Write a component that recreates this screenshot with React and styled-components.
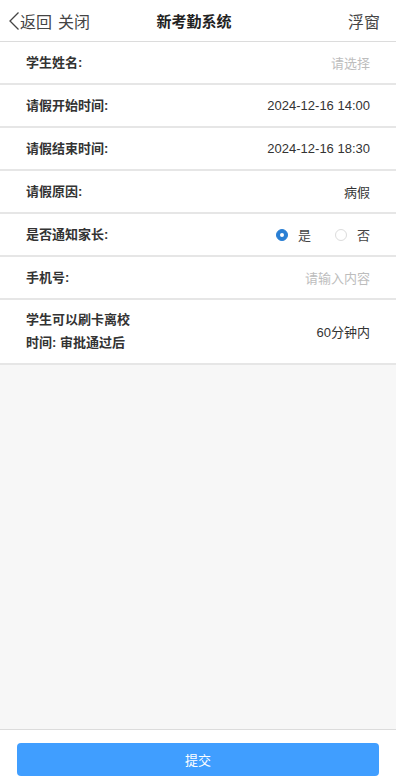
import React from "react";
import styled, { createGlobalStyle } from "styled-components";

const GlobalStyle = createGlobalStyle`
  html, body {
    margin: 0;
    padding: 0;
    height: 100%;
  }
  body {
    font-family: "Liberation Sans", "Noto Sans CJK SC", sans-serif;
    color: #333;
    background: #f7f7f7;
  }
  #root {
    height: 100%;
  }
`;

const rows = [
  { label: "学生姓名:", value: "请选择", placeholder: true },
  { label: "请假开始时间:", value: "2024-12-16 14:00" },
  { label: "请假结束时间:", value: "2024-12-16 18:30" },
  { label: "请假原因:", value: "病假" },
  { label: "是否通知家长:", radio: true },
  { label: "手机号:", value: "请输入内容", placeholder: true },
];

const App = () => {
  return (
    <Page>
      <GlobalStyle />
      <NavBar>
        <NavLeft>
          <svg width="12" height="20" viewBox="0 0 12 20">
            <path d="M10.5 1.5 L2 10 L10.5 18.5" fill="none" stroke="#444" strokeWidth="1.3" />
          </svg>
          <span>返回</span>
          <span className="close">关闭</span>
        </NavLeft>
        <Title>新考勤系统</Title>
        <NavRight>浮窗</NavRight>
      </NavBar>

      <Form>
        {rows.map((row) => (
          <Row key={row.label}>
            <Label>{row.label}</Label>
            {row.radio ? (
              <RadioGroup>
                <RadioItem>
                  <Radio checked />
                  是
                </RadioItem>
                <RadioItem>
                  <Radio />
                  否
                </RadioItem>
              </RadioGroup>
            ) : (
              <Value placeholder={row.placeholder ? 1 : 0}>{row.value}</Value>
            )}
          </Row>
        ))}
        <Row tall>
          <Stack>
            <Label>学生可以刷卡离校</Label>
            <Label>时间: 审批通过后</Label>
          </Stack>
          <Value>60分钟内</Value>
        </Row>
      </Form>

      <Spacer />

      <Footer>
        <SubmitButton>提交</SubmitButton>
      </Footer>
    </Page>
  );
};

const Page = styled.div`
  min-height: 100%;
  display: flex;
  flex-direction: column;
`;

const NavBar = styled.div`
  height: 42px;
  box-sizing: border-box;
  background: #fff;
  border-bottom: 1px solid #dcdcdc;
  display: grid;
  grid-template-columns: 1fr auto 1fr;
  align-items: center;
  padding: 0 16px 0 8px;
`;

const NavLeft = styled.div`
  display: flex;
  align-items: center;
  font-size: 16px;
  color: #444;
  .close {
    margin-left: 6px;
  }
`;

const Title = styled.div`
  font-size: 15px;
  font-weight: 700;
  color: #222;
`;

const NavRight = styled.div`
  justify-self: end;
  font-size: 16px;
  color: #444;
`;

const Form = styled.div`
  background: #fff;
`;

const Row = styled.div`
  height: ${(p) => (p.tall ? "65px" : "43px")};
  box-sizing: border-box;
  border-bottom: 2px solid #e6e6e6;
  display: flex;
  align-items: center;
  justify-content: space-between;
  padding: 0 26px 0 26px;
`;

const Stack = styled.div`
  display: flex;
  flex-direction: column;
  gap: 5px;
`;

const Label = styled.div`
  font-size: 13px;
  font-weight: 700;
  color: #333;
  line-height: 18px;
`;

const Value = styled.div`
  font-size: 13px;
  color: ${(p) => (p.placeholder ? "#bdbdbd" : "#333")};
`;

const RadioGroup = styled.div`
  display: flex;
  align-items: center;
  gap: 24px;
`;

const RadioItem = styled.label`
  display: flex;
  align-items: center;
  gap: 10px;
  font-size: 13px;
  color: #444;
`;

const Radio = styled.span`
  width: 12px;
  height: 12px;
  box-sizing: border-box;
  border-radius: 50%;
  background: ${(p) => (p.checked ? "#2a7fd4" : "#fff")};
  border: 1px solid ${(p) => (p.checked ? "#2a7fd4" : "#dcdcdc")};
  display: flex;
  align-items: center;
  justify-content: center;
  &::after {
    content: "";
    width: 4px;
    height: 4px;
    border-radius: 50%;
    background: #fff;
    display: ${(p) => (p.checked ? "block" : "none")};
  }
`;

const Spacer = styled.div`
  flex: 1;
  background: #f7f7f7;
`;

const Footer = styled.div`
  background: #fff;
  border-top: 1px solid #dcdcdc;
  padding: 13px 17px 8px;
`;

const SubmitButton = styled.button`
  width: 100%;
  height: 33px;
  border: none;
  border-radius: 4px;
  background: #409eff;
  color: #fff;
  font-family: inherit;
  font-size: 13px;
`;

export default App;
